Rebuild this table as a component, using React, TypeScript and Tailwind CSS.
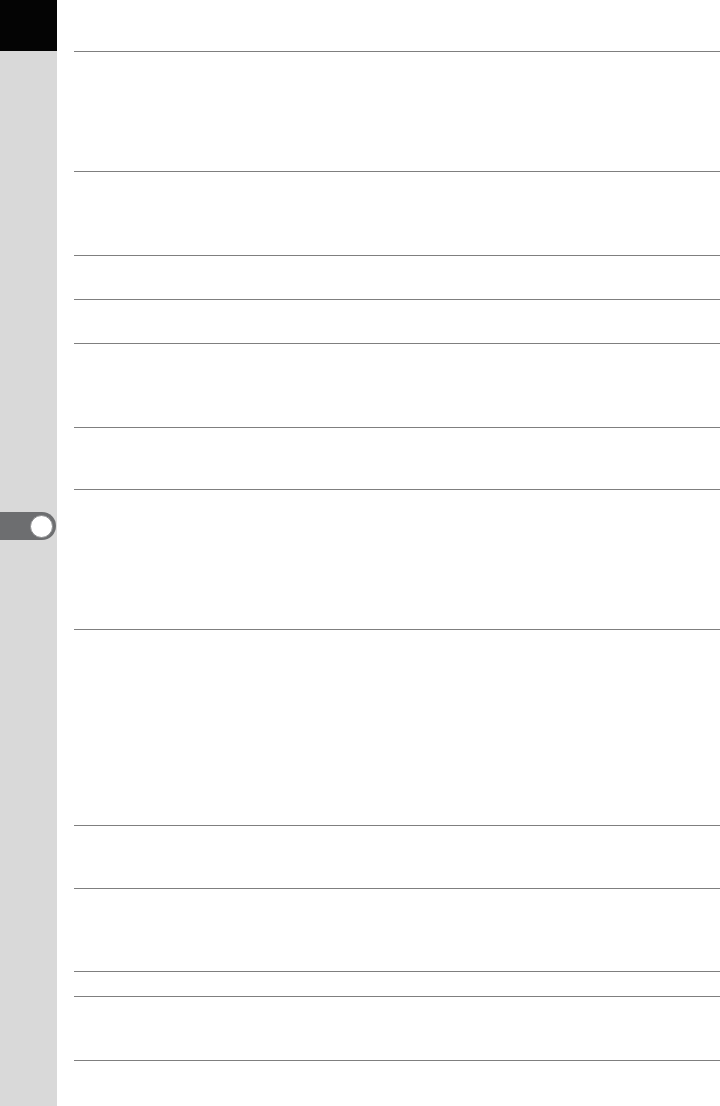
const rowHeights = [120, 84, 44, 44, 84, 62, 140, 196, 63, 83, 25, 64];

export default function App() {
  return (
    <div className="flex h-[1106px] w-[720px] overflow-hidden bg-white">
      <aside className="flex w-[57px] shrink-0 flex-col bg-[#d9d9d9]">
        <div className="h-[51px] bg-[#040404]" />
        <div className="mt-[461px] flex h-[28px] w-[56px] items-center justify-end rounded-r-full bg-[#6d6e70] pr-[3px]">
          <div className="h-[23px] w-[23px] rounded-full border border-[#8a8b8d] bg-white" />
        </div>
      </aside>

      <main className="flex flex-1 flex-col pl-[17px]">
        <div className="h-[51px]" />
        {rowHeights.map((h, i) => (
          <div
            key={i}
            className="border-t-[1.5px] border-[#7f7f7f]"
            style={{ height: h }}
          />
        ))}
        <div className="border-t-[1.5px] border-[#7f7f7f]" />
      </main>
    </div>
  );
}
